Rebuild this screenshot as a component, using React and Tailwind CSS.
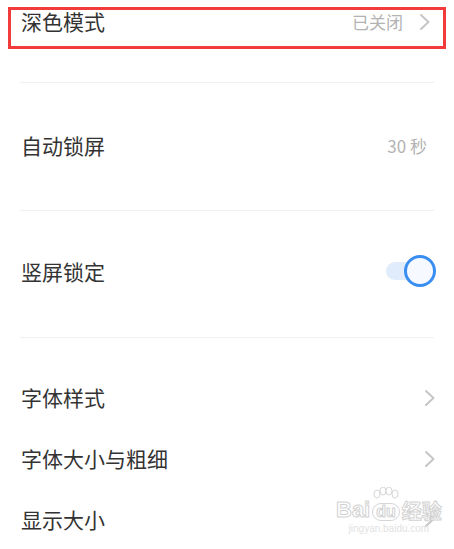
import React from "react";

const font = { fontFamily: '"Noto Sans CJK SC", "Noto Sans", sans-serif' };

function Chevron() {
  return (
    <svg width="12" height="18" viewBox="0 0 12 18" className="block">
      <polyline points="2,2 9.5,9 2,16" fill="none" stroke="#c6c6c6" strokeWidth="2" strokeLinecap="round" strokeLinejoin="round" />
    </svg>
  );
}

function Row({ label, right, className = "" }) {
  return (
    <div className={`flex items-center justify-between pl-[21px] pr-[18px] ${className}`}>
      <span className="text-[21px] leading-none text-[#333333]">{label}</span>
      <div className="flex items-center">{right}</div>
    </div>
  );
}

function Divider() {
  return <div className="mx-[20px] h-px bg-[#f1f1f1]" />;
}

export default function App() {
  return (
    <div className="relative w-[454px] h-[549px] overflow-hidden bg-white" style={font}>
      <div className="pt-[7px] px-[8px]">
        <div className="h-[42px] border-[3px] border-[#f23b3b] flex items-start justify-between pl-[10px] pr-[12px] pt-px">
          <span className="text-[21px] leading-[21px] text-[#333333]">深色模式</span>
          <div className="flex items-center gap-[16px] h-[21px]">
            <span className="text-[17px] leading-none text-[#b3b3b3]">已关闭</span>
            <Chevron />
          </div>
        </div>
      </div>
      <div className="h-[33px]" />
      <Divider />
      <div className="h-[127px] pt-[37px]">
        <Row
          className="h-[50px]"
          label="自动锁屏"
          right={<span className="text-[17px] leading-none text-[#b3b3b3] mr-[9px]">30 秒</span>}
        />
      </div>
      <Divider />
      <div className="h-[126px] pt-[35px]">
        <Row
          className="h-[50px]"
          label="竖屏锁定"
          right={
            <div className="flex items-center">
              <div className="w-[36px] h-[18px] rounded-full bg-[#e0ecfc] -mr-[18px]" />
              <div className="w-[32px] h-[32px] rounded-full border-[3px] border-[#3a8ef2] bg-[#f6f9ff] relative" />
            </div>
          }
        />
      </div>
      <Divider />
      <div className="pt-[29px]">
        <Row className="h-[61px]" label="字体样式" right={<Chevron />} />
        <Row className="h-[61px]" label="字体大小与粗细" right={<Chevron />} />
        <Row className="h-[60px]" label="显示大小" right={<Chevron />} />
      </div>

      <div className="absolute left-[336px] top-[493px] pointer-events-none flex flex-col items-center">
        <svg width="34" height="16" viewBox="0 0 34 16" className="absolute left-[33px] -top-[6px]">
          <g fill="white" stroke="#d6d6d6" strokeWidth="1">
            <ellipse cx="8" cy="7" rx="3" ry="4" />
            <ellipse cx="14" cy="4" rx="3" ry="4" />
            <ellipse cx="20" cy="4" rx="3" ry="4" />
            <ellipse cx="26" cy="7" rx="3" ry="4" />
          </g>
        </svg>
        <div
          className="flex items-end text-[22px] leading-none font-bold text-white [-webkit-text-stroke:1px_#d2d2d2] mt-[6px]"
          style={{ fontFamily: '"Liberation Sans", "Noto Sans CJK SC", sans-serif' }}
        >
          <span>Bai</span>
          <span className="mx-[2px] px-[3px] rounded-full border border-[#d6d6d6] text-[16px]">du</span>
          <span className="text-[20px]" style={font}>经验</span>
        </div>
        <span className="text-[10px] leading-none text-[#e2e2e2] mt-[3px]" style={{ fontFamily: '"Liberation Sans", sans-serif' }}>
          jingyan.baidu.com
        </span>
      </div>
    </div>
  );
}
